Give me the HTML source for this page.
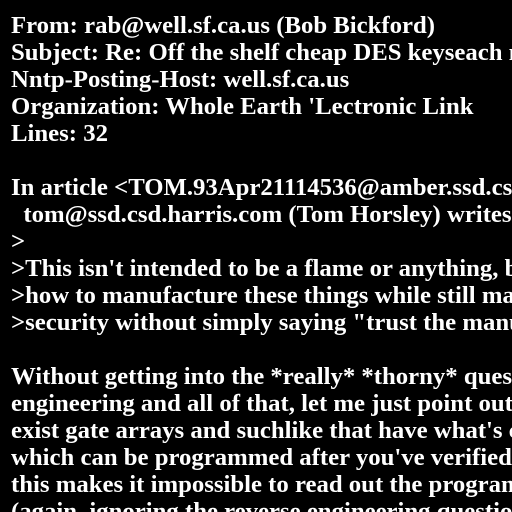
<!DOCTYPE html>
<html><head><style>
html,body{margin:0;padding:0;background:#000;width:512px;height:512px;overflow:hidden}
pre{margin:0;padding:12px 0 0 11px;color:#fff;font-family:"Liberation Serif",serif;font-weight:bold;font-size:24.75px;line-height:27px;white-space:pre;width:501px;height:500px;overflow:hidden}
</style></head><body><pre>From: rab@well.sf.ca.us (Bob Bickford)
Subject: Re: Off the shelf cheap DES keyseach machine
Nntp-Posting-Host: well.sf.ca.us
Organization: Whole Earth 'Lectronic Link
Lines: 32

In article &lt;TOM.93Apr21114536@amber.ssd.csd.harris.com&gt;
  tom@ssd.csd.harris.com (Tom Horsley) writes:
&gt;
&gt;This isn't intended to be a flame or anything, but
&gt;how to manufacture these things while still maintaining
&gt;security without simply saying "trust the manufacturer"

Without getting into the *really* *thorny* questions of reverse
engineering and all of that, let me just point out that there
exist gate arrays and suchlike that have what's called a fuse
which can be programmed after you've verified the chip, and
this makes it impossible to read out the program afterwards
(again, ignoring the reverse engineering questions)</pre></body></html>
